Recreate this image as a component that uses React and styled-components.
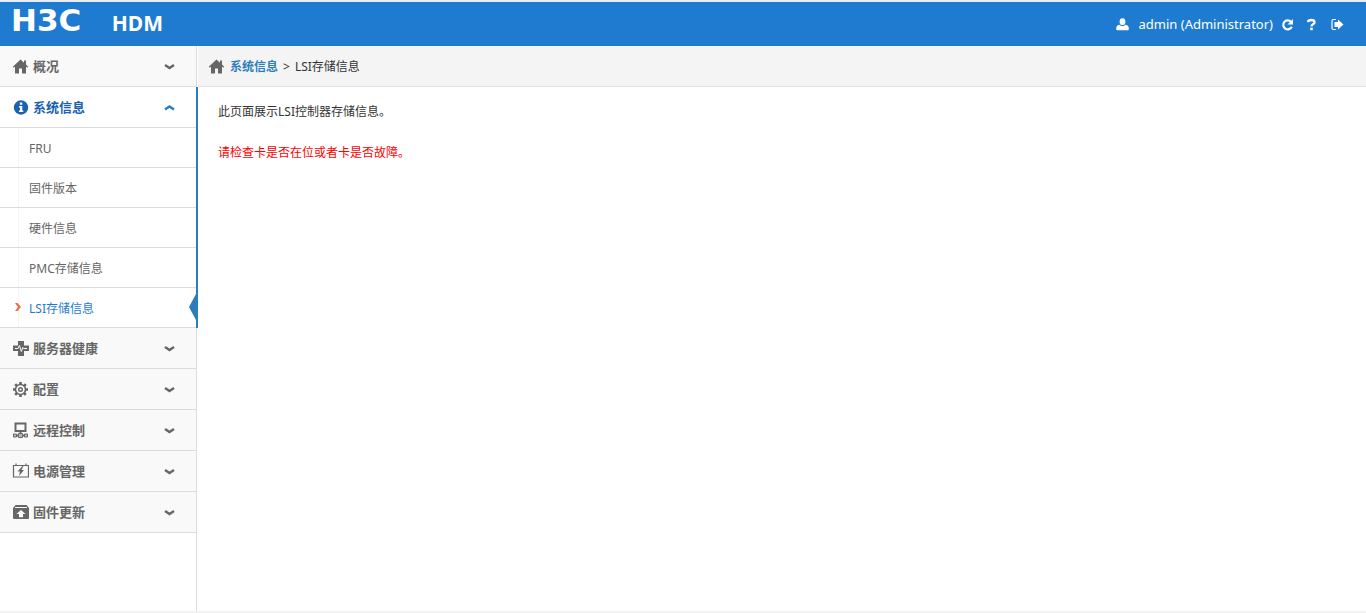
import React, { useState } from "react";
import styled, { createGlobalStyle } from "styled-components";

const GlobalStyle = createGlobalStyle`
  * {
    box-sizing: border-box;
  }
  body {
    margin: 0;
    background: #fff;
    color: #333;
    font-family: "Noto Sans", "Noto Sans CJK SC", sans-serif;
    font-size: 12px;
  }
`

const Page = styled.div`
  display: flex;
  flex-direction: column;
  min-height: 100vh;
  border-top: 2px solid #e9eef3;
  border-bottom: 2px solid #f2f2f2;
`

const Header = styled.header`
  display: flex;
  align-items: center;
  justify-content: space-between;
  height: 44px;
  padding: 0 22px 0 11px;
  background: #1f7bd0;
  color: #fff;
`

const Brand = styled.h1`
  display: flex;
  align-items: baseline;
  justify-content: space-between;
  width: 152px;
  margin: 0;
  padding-bottom: 6px;
  font-size: 21px;
  line-height: 38px;
`

const Logo = styled.span`
  font-family: "DejaVu Sans", sans-serif;
  font-size: 31px;
  font-weight: 700;
`

const UserBar = styled.div`
  display: flex;
  align-items: center;
  gap: 8px;
  font-size: 13px;
`

const UserName = styled.span`
  padding-left: 2px;
`

const Tools = styled.div`
  display: flex;
  gap: 12px;
`

const ToolButton = styled.button`
  display: flex;
  padding: 0;
  border: 0;
  background: none;
  color: inherit;
  cursor: pointer;
`

const Body = styled.div`
  display: flex;
  flex: 1;
`

const Sidebar = styled.nav`
  flex: 0 0 197px;
  border-right: 1px solid #dcdcdc;
`

const Group = styled.section`
  position: relative;

  &::after {
    content: "";
    display: ${({ $open }) => ($open ? "block" : "none")};
    position: absolute;
    top: 0;
    right: -2px;
    bottom: 0;
    width: 2px;
    background: #2b7dbc;
  }
`

const GroupButton = styled.button`
  display: flex;
  align-items: center;
  gap: 4px;
  width: 100%;
  height: 41px;
  padding: 0 21px 0 12px;
  border: 0;
  border-bottom: 1px solid #dcdcdc;
  background: ${({ $open }) => ($open ? "#fff" : "#f9f9f9")};
  color: ${({ $open }) => ($open ? "#1a62ab" : "#666")};
  font-family: inherit;
  font-size: 13px;
  font-weight: 700;
  text-align: left;
  cursor: pointer;
`

const GroupLabel = styled.span`
  flex: 1;
  padding-bottom: 2px;
`

const SubList = styled.ul`
  margin: 0;
  padding: 0;
  list-style: none;
`

const SubItem = styled.li`
  position: relative;
  height: 40px;
  border-bottom: 1px solid #dcdcdc;
`

const SubLink = styled.a`
  display: grid;
  grid-template-columns: 11px 1fr;
  align-items: center;
  height: 100%;
  padding-left: 18px;
  background: repeating-linear-gradient(#eaeaea 0 1px, #fff 1px 2px) 18px 0 / 1px 100% no-repeat;
  color: ${({ $active }) => ($active ? "#1f7bd0" : "#666")};
  line-height: 19px;
  text-decoration: none;
`

const SubLabel = styled.span`
  grid-column: 2;
  padding-top: 2px;
`

const Marker = styled.svg`
  position: absolute;
  top: 14px;
  left: 14px;
`

const Notch = styled.svg`
  position: absolute;
  top: 6px;
  right: 0;
`

const Main = styled.main`
  flex: 1;
  padding-left: 1px;
`

const Breadcrumb = styled.div`
  display: flex;
  align-items: center;
  gap: 5px;
  height: 41px;
  padding-left: 10px;
  border-bottom: 1px solid #e2e2e2;
  background: #f4f4f4;
`

const CrumbLink = styled.a`
  color: #2b7dbc;
  font-weight: 700;
  text-decoration: none;
`

const Content = styled.div`
  padding: 15px 20px;
  line-height: 20px;
`

const Intro = styled.p`
  margin: 0 0 21px;
`

const Warning = styled.p`
  margin: 0;
  color: #f00;
`

const HomeIcon = () => (
  <svg width="17" height="16" viewBox="0 0 17 16" fill="#666">
    <path d="M8.5 1.5.8 8.7l1 1L3 8.6v6.9h4v-5h3v5h4V8.6l1.2 1.1 1-1L14 6.5v-4h-2v2.2z" />
  </svg>
)

const InfoIcon = () => (
  <svg width="17" height="16" viewBox="0 0 17 16">
    <circle cx="9" cy="8.5" r="7.2" fill="#1a62ab" />
    <path d="M7.8 3.5h2.5v2.2H7.8zM7 7h3.3v4.500h1V13H7v-1.500h1v-3H7z" fill="#fff" />
  </svg>
)

const HealthIcon = () => (
  <svg width="17" height="16" viewBox="0 0 17 16">
    <path d="M6 1h6v4.5h5V11h-5v5H6v-5H1V5.5h5z" fill="#666" />
    <path d="M3 8.500h3L7.500 5.500l1.800 6 1.500-4 .8 1H15" fill="none" stroke="#f9f9f9" />
  </svg>
)

const GearIcon = () => (
  <svg width="17" height="16" viewBox="0 0 17 16" fill="none" stroke="#666">
    <circle cx="8.5" cy="8.5" r="5" strokeWidth="1.6" />
    <circle cx="8.5" cy="8.5" r="1.8" strokeWidth="1.4" />
    <path d="M8.5 1v2.5M8.5 13.5V16M1 8.5h2.5M13.5 8.5H16M3.2 3.2l1.7 1.7M12.1 12.1l1.7 1.7M13.8 3.2l-1.7 1.7M4.9 12.1l-1.7 1.7" strokeWidth="2.6" />
  </svg>
)

const RemoteIcon = () => (
  <svg width="17" height="16" viewBox="0 0 17 16" fill="none" stroke="#666">
    <path d="M3.5 1.5h10V9h-10z" strokeWidth="2" />
    <path d="M8.5 9v3M2 13.5h13" strokeWidth="2" />
    <path d="M6.5 11.5h4v4h-4zM1.5 12h3v3h-3zM12.5 12h3v3h-3z" fill="#bbb" />
  </svg>
)

const PowerIcon = () => (
  <svg width="17" height="16" viewBox="0 0 17 16">
    <path d="M1.5 2.5h15V14h-15zM4 .5v2M14 .5v2" fill="none" stroke="#666" strokeWidth="1.2" />
    <path d="M10.5 3l-5 5.500H8L7 13l5-6H9.500l2-4z" fill="#666" />
  </svg>
)

const UpdateIcon = () => (
  <svg width="17" height="16" viewBox="0 0 17 16">
    <path d="M3.5 1h11L17 4v10q0 1-1 1H2q-1 0-1-1V4z" fill="#666" />
    <path d="M3 3.5h12" stroke="#f9f9f9" />
    <path d="M9 6l4.5 4H11v3.2H7V10H4.5z" fill="#fff" />
  </svg>
)

const Chevron = ({ up }) => (
  <svg width="11" height="8" viewBox="0 0 11 8" fill="none" stroke={up ? "#2b7dbc" : "#666"} strokeWidth="2.4">
    <path d={up ? "M1 6.5l4.5-3 4.5 3" : "M1 3l4.5 3L10 3"} />
  </svg>
)

const UserIcon = () => (
  <svg width="13" height="14" viewBox="0 0 13 14" fill="#fff">
    <ellipse cx="6.5" cy="4.7" rx="2.9" ry="3.4" />
    <path d="M3.2 7.8q3.3 2.7 6.600 0 3 .7 3 3.700v.7q0 1-1 1H1.200q-1 0-1-1v-.7q0-3 3-3.700z" />
  </svg>
)

const RefreshIcon = () => (
  <svg width="13" height="14" viewBox="0 0 13 14">
    <path d="M10 4.7a4.5 4.5 0 1 0 .8 5.1" fill="none" stroke="#fff" strokeWidth="2.2" />
    <path d="M12 2v5.5H6.5z" fill="#fff" />
  </svg>
)

const HelpIcon = () => (
  <svg width="13" height="14" viewBox="0 0 13 14">
    <path d="M2 5.2Q2.2 3 5.3 3t3.2 2.2q0 1.3-1.5 2T5.5 9.5" fill="none" stroke="#fff" strokeWidth="2.3" />
    <path d="M4.2 10.7h2.6v2.5H4.2z" fill="#fff" />
  </svg>
)

const LogoutIcon = () => (
  <svg width="13" height="14" viewBox="0 0 13 14">
    <path d="M5 2.5H2.5Q1 2.5 1 4v7q0 1.5 1.5 1.5H5" fill="none" stroke="#fff" strokeWidth="1.2" />
    <path d="M7 2.5l5.5 5-5.5 5V10H3.5V5H7z" fill="#fff" />
  </svg>
)

const menu = [
  { title: "概况", Icon: HomeIcon },
  {
    title: "系统信息",
    Icon: InfoIcon,
    items: ["FRU", "固件版本", "硬件信息", "PMC存储信息", "LSI存储信息"],
  },
  { title: "服务器健康", Icon: HealthIcon },
  { title: "配置", Icon: GearIcon },
  { title: "远程控制", Icon: RemoteIcon },
  { title: "电源管理", Icon: PowerIcon },
  { title: "固件更新", Icon: UpdateIcon },
]

const MenuGroup = ({ title, Icon, items = [], open, onToggle }) => (
  <Group $open={open}>
    <GroupButton type="button" $open={open} aria-expanded={open} onClick={onToggle}>
      <Icon />
      <GroupLabel>{title}</GroupLabel>
      <Chevron up={open} />
    </GroupButton>
    {open && (
      <SubList>
        {items.map((item) => {
          const active = item === "LSI存储信息"
          return (
            <SubItem key={item}>
              <SubLink href="#" $active={active}>
                <SubLabel>{item}</SubLabel>
              </SubLink>
              {active && (
                <>
                  <Marker width="8" height="10" viewBox="0 0 8 10">
                    <path d="M1 1h2.5L7 5 3.5 9H1l3-4z" fill="#f26a3d" />
                  </Marker>
                  <Notch width="7" height="26" viewBox="0 0 7 26">
                    <path d="M7 0v26L0 13z" fill="#2b7dbc" />
                  </Notch>
                </>
              )}
            </SubItem>
          )
        })}
      </SubList>
    )}
  </Group>
)

export default function App() {
  const [opened, setOpened] = useState("系统信息")

  return (
    <>
      <GlobalStyle />
      <Page>
        <Header>
          <Brand>
            <Logo>H3C</Logo>
            <span>HDM</span>
          </Brand>
          <UserBar>
            <UserIcon />
            <UserName>admin (Administrator)</UserName>
            <Tools>
              <ToolButton type="button" aria-label="刷新"><RefreshIcon /></ToolButton>
              <ToolButton type="button" aria-label="帮助"><HelpIcon /></ToolButton>
              <ToolButton type="button" aria-label="退出"><LogoutIcon /></ToolButton>
            </Tools>
          </UserBar>
        </Header>
        <Body>
          <Sidebar>
            {menu.map((group) => (
              <MenuGroup
                key={group.title}
                {...group}
                open={opened === group.title}
                onToggle={() => setOpened(opened === group.title ? "" : group.title)}
              />
            ))}
          </Sidebar>
          <Main>
            <Breadcrumb>
              <HomeIcon />
              <CrumbLink href="#">系统信息</CrumbLink>
              <span>&gt;</span>
              <span>LSI存储信息</span>
            </Breadcrumb>
            <Content>
              <Intro>此页面展示LSI控制器存储信息。</Intro>
              <Warning>请检查卡是否在位或者卡是否故障。</Warning>
            </Content>
          </Main>
        </Body>
      </Page>
    </>
  )
}
